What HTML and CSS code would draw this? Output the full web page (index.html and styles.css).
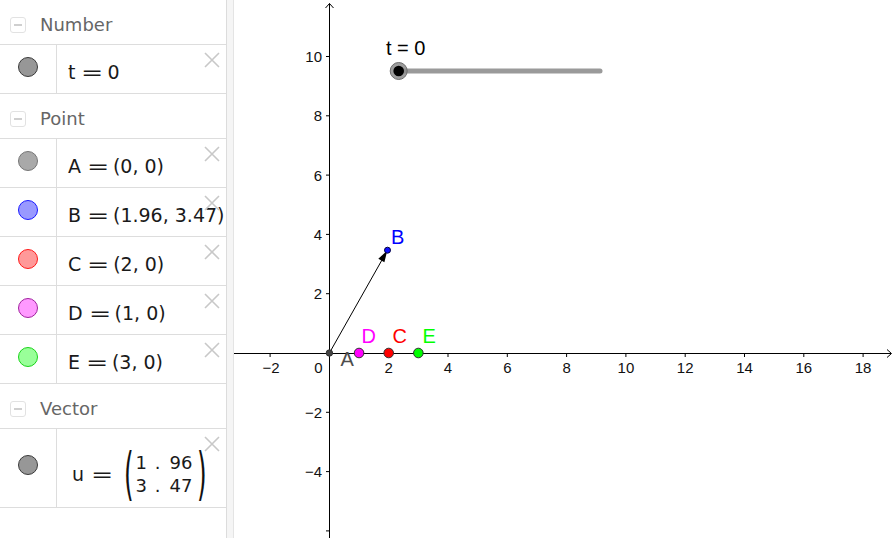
FILE: index.html
```html
<!DOCTYPE html>
<html>
<head>
<meta charset="utf-8">
<link rel="stylesheet" href="styles.css">
</head>
<body>
<div class="app">
  <aside class="algebra">
    <div class="group-head"><span class="toggle"></span><span class="group-name">Number</span></div>
    <div class="item">
      <div class="marble-cell"><span class="marble m-t"></span></div>
      <div class="value">t<span class="eq">=</span>0</div>
      <svg class="close" viewBox="0 0 16 16"><path d="M1 1L15 15M15 1L1 15"/></svg>
    </div>

    <div class="group-head"><span class="toggle"></span><span class="group-name">Point</span></div>
    <div class="item">
      <div class="marble-cell"><span class="marble m-a"></span></div>
      <div class="value">A<span class="eq">=</span>(0, 0)</div>
      <svg class="close" viewBox="0 0 16 16"><path d="M1 1L15 15M15 1L1 15"/></svg>
    </div>
    <div class="item">
      <div class="marble-cell"><span class="marble m-b"></span></div>
      <div class="value">B<span class="eq">=</span>(1.96, 3.47)</div>
      <svg class="close" viewBox="0 0 16 16"><path d="M1 1L15 15M15 1L1 15"/></svg>
    </div>
    <div class="item">
      <div class="marble-cell"><span class="marble m-c"></span></div>
      <div class="value">C<span class="eq">=</span>(2, 0)</div>
      <svg class="close" viewBox="0 0 16 16"><path d="M1 1L15 15M15 1L1 15"/></svg>
    </div>
    <div class="item">
      <div class="marble-cell"><span class="marble m-d"></span></div>
      <div class="value">D<span class="eq">=</span>(1, 0)</div>
      <svg class="close" viewBox="0 0 16 16"><path d="M1 1L15 15M15 1L1 15"/></svg>
    </div>
    <div class="item">
      <div class="marble-cell"><span class="marble m-e"></span></div>
      <div class="value">E<span class="eq">=</span>(3, 0)</div>
      <svg class="close" viewBox="0 0 16 16"><path d="M1 1L15 15M15 1L1 15"/></svg>
    </div>

    <div class="group-head"><span class="toggle"></span><span class="group-name">Vector</span></div>
    <div class="item tall">
      <div class="marble-cell"><span class="marble m-t"></span></div>
      <div class="vec-value">
        <span class="vname">u</span><span class="eq veq">=</span>
        <span class="paren pl">(</span>
        <span class="matrix">
          <span>1</span><span>.</span><span>96</span>
          <span>3</span><span>.</span><span>47</span>
        </span>
        <span class="paren pr">)</span>
      </div>
      <svg class="close" viewBox="0 0 16 16"><path d="M1 1L15 15M15 1L1 15"/></svg>
    </div>
  </aside>
  <div class="splitter"></div>
  <main class="graphics">
    <svg class="plot" width="660" height="538" viewBox="234 0 660 538">
      <g class="axes">
        <line x1="234" y1="353.5" x2="891" y2="353.5"/>
        <polyline points="887,349.5 891.5,353.5 887,357.5"/>
        <line x1="329.5" y1="538" x2="329.5" y2="3.5"/>
        <polyline points="325.5,8 329.5,3.5 333.5,8"/>
        <line x1="270.1" y1="353.5" x2="270.1" y2="357"/>
        <line x1="388.7" y1="353.5" x2="388.7" y2="357"/>
        <line x1="448" y1="353.5" x2="448" y2="357"/>
        <line x1="507.3" y1="353.5" x2="507.3" y2="357"/>
        <line x1="566.6" y1="353.5" x2="566.6" y2="357"/>
        <line x1="625.9" y1="353.5" x2="625.9" y2="357"/>
        <line x1="685.2" y1="353.5" x2="685.2" y2="357"/>
        <line x1="744.5" y1="353.5" x2="744.5" y2="357"/>
        <line x1="803.8" y1="353.5" x2="803.8" y2="357"/>
        <line x1="863.1" y1="353.5" x2="863.1" y2="357"/>
        <line x1="326" y1="56.5" x2="329.5" y2="56.5"/>
        <line x1="326" y1="115.8" x2="329.5" y2="115.8"/>
        <line x1="326" y1="175.1" x2="329.5" y2="175.1"/>
        <line x1="326" y1="234.4" x2="329.5" y2="234.4"/>
        <line x1="326" y1="293.7" x2="329.5" y2="293.7"/>
        <line x1="326" y1="412.3" x2="329.5" y2="412.3"/>
        <line x1="326" y1="471.6" x2="329.5" y2="471.6"/>
        <line x1="326" y1="530.9" x2="329.5" y2="530.9"/>
      </g>
      <g class="ticklbl xl">
        <text x="271" y="372.5">−2</text>
        <text x="388.7" y="372.5">2</text>
        <text x="448" y="372.5">4</text>
        <text x="507.3" y="372.5">6</text>
        <text x="566.6" y="372.5">8</text>
        <text x="625.9" y="372.5">10</text>
        <text x="685.2" y="372.5">12</text>
        <text x="744.5" y="372.5">14</text>
        <text x="803.8" y="372.5">16</text>
        <text x="863.1" y="372.5">18</text>
      </g>
      <g class="ticklbl yl">
        <text x="322.5" y="372.5">0</text>
        <text x="322" y="62">10</text>
        <text x="322" y="121.3">8</text>
        <text x="322" y="180.6">6</text>
        <text x="322" y="239.9">4</text>
        <text x="322" y="299.2">2</text>
        <text x="322" y="417.8">−2</text>
        <text x="322" y="477.1">−4</text>
      </g>

      <line class="vec" x1="329.4" y1="353" x2="382.2" y2="259.6"/>
      <polygon class="vec-head" points="387.3,250.6 384.4,262.2 378.3,258.8"/>

      <circle class="pt" cx="329.4" cy="353" r="3.2" fill="#444" stroke="#333"/>
      <circle class="pt" cx="387.5" cy="250.2" r="3" fill="#1010ff" stroke="#000040"/>
      <circle class="pt" cx="359.05" cy="353" r="4.8" fill="#ff00ff" stroke="#333"/>
      <circle class="pt" cx="388.7" cy="353" r="4.8" fill="#ff0000" stroke="#333"/>
      <circle class="pt" cx="418.35" cy="353" r="4.8" fill="#00ff00" stroke="#333"/>

      <text class="plbl" x="391" y="243.5" fill="#0000ff">B</text>
      <text class="plbl" x="361.5" y="343" fill="#ff00ff">D</text>
      <text class="plbl" x="392.5" y="343" fill="#ff0000">C</text>
      <text class="plbl" x="422.5" y="343" fill="#00ff00">E</text>
      <text class="plbl" x="340.5" y="366" fill="#4d4d4d">A</text>

      <text class="slbl" x="386" y="55">t = 0</text>
      <line class="track" x1="399" y1="71" x2="600" y2="71"/>
      <circle cx="398.7" cy="71" r="8.5" fill="#8c8c8c" fill-opacity="0.85" stroke="#6e6e6e" stroke-width="1"/>
      <circle cx="398.7" cy="71" r="5.3" fill="#000"/>
    </svg>
  </main>
</div>
</body>
</html>
```

FILE: styles.css
```css
* { box-sizing: border-box; }
html, body { margin: 0; padding: 0; }
body {
  width: 894px;
  height: 538px;
  overflow: hidden;
  background: #fff;
  font-family: "DejaVu Sans", "Noto Sans", sans-serif;
}
.app { display: flex; height: 538px; }

.algebra {
  width: 227px;
  flex: none;
  border-right: 1px solid #dcdcdc;
  display: flex;
  flex-direction: column;
}
.splitter {
  width: 7px;
  flex: none;
  background: #f5f5f5;
  border-right: 1px solid #e4e4e4;
}
.graphics { flex: 1; background: #fff; overflow: hidden; }
.plot { display: block; }

.group-head {
  height: 45px;
  border-bottom: 1px solid #dddddd;
  display: flex;
  align-items: center;
  padding: 5px 0 0 10px;
}
.toggle {
  width: 16px;
  height: 16px;
  border: 1px solid #e2e2e2;
  border-radius: 3px;
  position: relative;
  margin-right: 14px;
  flex: none;
}
.toggle::after {
  content: "";
  position: absolute;
  left: 3px;
  right: 3px;
  top: 6.5px;
  height: 1.5px;
  background: #cfcfcf;
}
.group-name { font-size: 18px; line-height: 21px; color: #666; }

.item {
  height: 49px;
  border-bottom: 1px solid #dddddd;
  display: flex;
  position: relative;
  flex: none;
}
.item.tall { height: 79px; }
.marble-cell {
  width: 57px;
  flex: none;
  border-right: 1px solid #dddddd;
  padding: 12px 0 0 18px;
}
.tall .marble-cell { padding-top: 26px; }
.marble {
  display: block;
  width: 20px;
  height: 20px;
  border-radius: 50%;
  border: 1px solid;
}
.m-t { background: #979797; border-color: #3a3a3a; }
.m-a { background: #a9a9a9; border-color: #767676; }
.m-b { background: #9999ff; border-color: #1a1aff; }
.m-c { background: #ff9999; border-color: #ff1a1a; }
.m-d { background: #ff99ff; border-color: #a0229e; }
.m-e { background: #99ff99; border-color: #1ad41a; }

.value {
  padding: 16px 0 0 11px;
  font-size: 19px;
  line-height: 22px;
  color: #1a1a1a;
  white-space: nowrap;
}
.eq {
  display: inline-block;
  margin: 0 10px 0 6px;
  transform: scaleX(1.4);
  transform-origin: left center;
}
.vec-value {
  display: flex;
  align-items: center;
  padding: 12px 0 0 15px;
  font-size: 19px;
  line-height: 22px;
  color: #1a1a1a;
  white-space: nowrap;
}
.veq { margin: 0 0 0 7px; }
.paren {
  display: inline-block;
  transform: translateY(-2px) scale(1.3, 3);
  transform-origin: center;
  color: #111;
}
.pl { margin-left: 18px; }
.pr { margin-left: 6px; }
.matrix {
  display: inline-grid;
  grid-template-columns: auto auto auto;
  column-gap: 8px;
  font-size: 18px;
  line-height: 23px;
  margin-left: 3px;
}
.matrix span:nth-child(3n) { margin-left: 1px; }

.close {
  position: absolute;
  top: 7px;
  right: 6px;
  width: 16px;
  height: 16px;
  fill: none;
  stroke: #c8c8c8;
  stroke-width: 1.6;
}

.axes line, .axes polyline { stroke: #000; stroke-width: 1; fill: none; }
.ticklbl text {
  font-family: "Liberation Sans", Arial, sans-serif;
  font-size: 15px;
  fill: #111;
}
.xl text { text-anchor: middle; }
.yl text { text-anchor: end; }
.vec { stroke: #000; stroke-width: 1; }
.vec-head { fill: #000; }
.pt { stroke-width: 1; }
.plbl {
  font-family: "Liberation Sans", Arial, sans-serif;
  font-size: 20px;
}
.slbl {
  font-family: "Liberation Sans", Arial, sans-serif;
  font-size: 20px;
  fill: #000;
}
.track { stroke: #9a9a9a; stroke-width: 5; stroke-linecap: round; }
```
